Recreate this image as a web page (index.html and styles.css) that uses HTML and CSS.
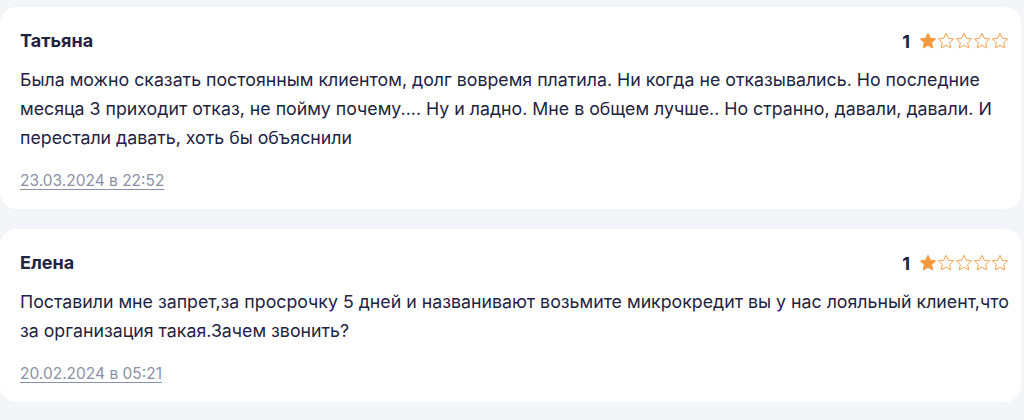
FILE: index.html
```html
<!doctype html>
<html lang="ru">
<head>
    <meta charset="UTF-8">
    <meta name="viewport" content="width=device-width, initial-scale=1.0">
    <title>Отзывы</title>
    <link rel="stylesheet" href="styles.css">
</head>
<body>
    <svg width="0" height="0" class="defs">
        <defs>
            <path id="star" d="M9 1.3l2.3 4.9 5.3.7-3.9 3.7 1 5.3L9 13.3l-4.7 2.6 1-5.3L1.4 6.9l5.3-.7z"/>
        </defs>
    </svg>

    <div class="reviews">
        <!-- Отзыв -->
        <div class="review">
            <div class="review-head">
                <div class="review-name">Татьяна</div>
                <div class="rating">
                    <span class="rating-value">1</span>
                    <div class="stars">
                        <svg class="star full" viewBox="0 0 18 18"><use href="#star"/></svg>
                        <svg class="star" viewBox="0 0 18 18"><use href="#star"/></svg>
                        <svg class="star" viewBox="0 0 18 18"><use href="#star"/></svg>
                        <svg class="star" viewBox="0 0 18 18"><use href="#star"/></svg>
                        <svg class="star" viewBox="0 0 18 18"><use href="#star"/></svg>
                    </div>
                </div>
            </div>
            <p class="review-text">Была можно сказать постоянным клиентом, долг вовремя платила. Ни когда не отказывались. Но последние месяца 3 приходит отказ, не пойму почему.... Ну и ладно. Мне в общем лучше.. Но странно, давали, давали. И перестали давать, хоть бы объяснили</p>
            <a class="review-date" href="#">23.03.2024 в 22:52</a>
        </div>

        <div class="review">
            <div class="review-head">
                <div class="review-name">Елена</div>
                <div class="rating">
                    <span class="rating-value">1</span>
                    <div class="stars">
                        <svg class="star full" viewBox="0 0 18 18"><use href="#star"/></svg>
                        <svg class="star" viewBox="0 0 18 18"><use href="#star"/></svg>
                        <svg class="star" viewBox="0 0 18 18"><use href="#star"/></svg>
                        <svg class="star" viewBox="0 0 18 18"><use href="#star"/></svg>
                        <svg class="star" viewBox="0 0 18 18"><use href="#star"/></svg>
                    </div>
                </div>
            </div>
            <p class="review-text">Поставили мне запрет,за просрочку 5 дней и названивают возьмите микрокредит вы у нас лояльный клиент,что за организация такая.Зачем звонить?</p>
            <a class="review-date" href="#">20.02.2024 в 05:21</a>
        </div>

        <div class="review review-next"></div>
    </div>
</body>
</html>
```

FILE: styles.css
```css
body, html {
    margin: 0;
    padding: 0;
    background-color: #f4f5f9;
    font-family: Inter, "Noto Sans", Arial, sans-serif;
    color: #1f2441;
    overflow: hidden;
}

.defs {
    position: absolute;
}

/* Список отзывов */
.reviews {
    display: flex;
    flex-direction: column;
    gap: 20px;
    padding: 7px 3px 0 0;
}

/* Карточка */
.review {
    background: #fff;
    border-radius: 16px;
    padding: 24px 12px 18px 20px;
}

.review-next {
    height: 20px;
    padding: 0;
}

.review-head {
    display: flex;
    justify-content: space-between;
    align-items: center;
    height: 20px;
}

.review-name {
    font-size: 18px;
    font-weight: 700;
    line-height: 20px;
}

.rating {
    display: flex;
    align-items: center;
    gap: 9px;
}

.rating-value {
    font-size: 18px;
    font-weight: 700;
}

.stars {
    display: flex;
    gap: 0;
}

.star {
    width: 18px;
    height: 18px;
    fill: none;
    stroke: #f5a04a;
    stroke-width: 1;
    stroke-linejoin: round;
}

.star.full {
    fill: #f39a3f;
    stroke: #f39a3f;
}

.review-text {
    margin: 14px 0 0;
    font-size: 17.75px;
    line-height: 29px;
}

.review-date {
    display: inline-block;
    margin-top: 19px;
    font-size: 15.5px;
    line-height: 20px;
    color: #8b91a5;
    text-decoration: underline;
    text-underline-offset: 3px;
}
```
